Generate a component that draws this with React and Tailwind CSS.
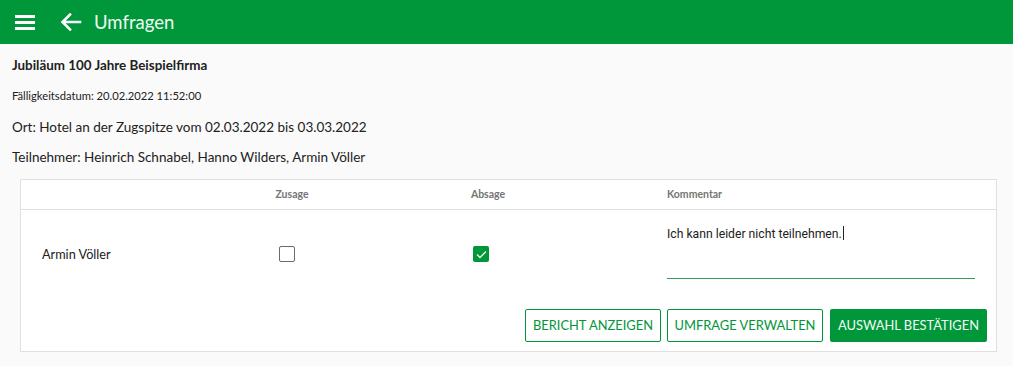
import React from "react";

function MenuIcon() {
  return (
    <svg width="22" height="18" viewBox="0 0 22 18" fill="none">
      <rect x="1" y="2" width="20" height="3" fill="#fff" />
      <rect x="1" y="8" width="20" height="3" fill="#fff" />
      <rect x="1" y="14" width="20" height="3" fill="#fff" />
    </svg>
  );
}

function BackIcon() {
  return (
    <svg width="22" height="20" viewBox="0 0 22 20" fill="none">
      <path
        d="M20 10H3M10 2.5L2.5 10L10 17.5"
        stroke="#fff"
        strokeWidth="2.6"
        strokeLinecap="square"
      />
    </svg>
  );
}

function CheckBox({ checked }) {
  return checked ? (
    <span className="flex h-4 w-4 items-center justify-center rounded-[2px] bg-[#00963a]">
      <svg width="11" height="9" viewBox="0 0 11 9" fill="none">
        <path d="M1 4.5L4 7.5L10 1.5" stroke="#e8f5ec" strokeWidth="1.4" />
      </svg>
    </span>
  ) : (
    <span className="block h-4 w-4 rounded-[2px] border-[1.5px] border-[#6b6b6b] bg-white" />
  );
}

export default function App() {
  return (
    <div className="min-h-[366px] bg-[#fafafa] font-['Lato',sans-serif] text-[#212121]">
      {/* top bar */}
      <div className="flex h-[44px] items-center bg-[#00963a] text-white">
        <div className="ml-[14px] flex">
          <MenuIcon />
        </div>
        <div className="ml-[24px] flex">
          <BackIcon />
        </div>
        <h1 className="ml-[12px] text-[18.5px] leading-none text-[#f0fbf3]">Umfragen</h1>
      </div>

      <div className="px-3">
        <div className="mt-[11px] text-[13.4px] font-bold leading-[20px]">
          Jubiläum 100 Jahre Beispielfirma
        </div>
        <div className="mt-[13px] text-[11.2px] leading-[16px]">
          Fälligkeitsdatum: 20.02.2022 11:52:00
        </div>
        <div className="mt-[13px] text-[13.5px] leading-[20px]">
          Ort: Hotel an der Zugspitze vom 02.03.2022 bis 03.03.2022
        </div>
        <div className="mt-[10px] text-[13.5px] leading-[20px]">
          Teilnehmer: Heinrich Schnabel, Hanno Wilders, Armin Völler
        </div>
      </div>

      {/* survey card */}
      <div className="mx-[20px] mt-[12px] w-[977px] border border-[#e0e0e0] bg-white">
        <div className="grid h-[30px] grid-cols-[173px_196px_196px_1fr] items-center border-b border-[#e0e0e0] text-[10.5px] font-bold text-[#757575]">
          <div />
          <div className="text-center">Zusage</div>
          <div className="text-center">Absage</div>
          <div className="pl-[81px]">Kommentar</div>
        </div>

        <div className="grid h-[88px] grid-cols-[173px_196px_196px_1fr] items-center">
          <div className="translate-y-[1px] pl-[21px] text-[12.7px]">Armin Völler</div>
          <div className="flex pl-[85px]">
            <CheckBox />
          </div>
          <div className="flex pl-[83px]">
            <CheckBox checked />
          </div>
          <div className="self-start pl-[81px] pr-[21px] pt-[14px]">
            <div className="h-[55px] border-b border-[#3a9a5c] font-['Roboto',sans-serif] text-[12.2px] leading-[16px] text-[#222]">
              Ich kann leider nicht teilnehmen.
              <span className="ml-[1px] inline-block h-[14px] w-px translate-y-[2px] bg-[#222]" />
            </div>
          </div>
        </div>

        <div className="flex justify-end gap-[6px] pb-[9px] pr-[9px] pt-[11px] text-[12.9px]">
          <button className="h-[33px] w-[136px] rounded-[2px] border border-[#00963a] bg-white uppercase text-[#00963a]">
            Bericht anzeigen
          </button>
          <button className="h-[33px] w-[156px] rounded-[2px] border border-[#00963a] bg-white uppercase text-[#00963a]">
            Umfrage verwalten
          </button>
          <button className="ml-[1px] h-[33px] w-[157px] rounded-[2px] bg-[#00963a] uppercase text-[#f0fbf3]">
            Auswahl bestätigen
          </button>
        </div>
      </div>
    </div>
  );
}
